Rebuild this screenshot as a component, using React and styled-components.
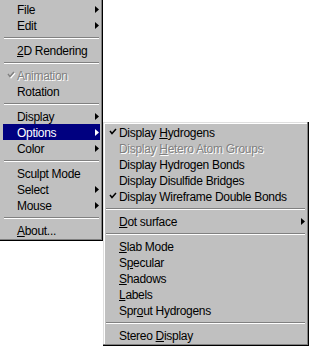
import styled, { createGlobalStyle } from "styled-components"

const GlobalStyle = createGlobalStyle`
    html, body {
        margin: 0;
        padding: 0;
        background: #ffffff;
    }
    body {
        font-family: "Liberation Sans", Arial, sans-serif;
        font-size: 12px;
    }
`

const Stage = styled.div`
    position: relative;
    width: 309px;
    height: 348px;
    overflow: hidden;
    background: #ffffff;
`

const Menu = styled.div`
    display: flex;
    flex-direction: column;
    box-sizing: border-box;
    width: ${p => p.$width}px;
    background: #c0c0c0;
    padding: ${p => p.$clipped ? "1px 3px 3px 3px" : "2px 3px 3px 2px"};
    box-shadow:
        inset -1px -1px 0 #000000,
        inset -2px -2px 0 #808080
        ${p => p.$clipped ? "" : ", inset 1px 1px 0 #dfdfdf, inset 2px 2px 0 #ffffff"};
`

const SubMenu = styled(Menu)`
    position: absolute;
    left: 103px;
    top: 122px;
`

const Item = styled.div`
    display: grid;
    grid-template-columns: 14px 1fr 6px;
    align-items: center;
    height: 16px;
    white-space: nowrap;
    background: ${p => p.$active ? "#000080" : "transparent"};
    color: ${p => p.$active ? "#ffffff" : p.$disabled ? "#808080" : "#000000"};
    text-shadow: ${p => p.$disabled ? "1px 1px 0 #ffffff" : "none"};
`

const Gutter = styled.span`
    display: flex;
    align-items: center;
    padding-left: 5px;
    height: 16px;
`

const Label = styled.span`
    line-height: 14px;
    padding-top: 2px;
    letter-spacing: -0.3px;
`

const Key = styled.span`
    text-decoration: underline;
    text-underline-offset: 1px;
`

const ArrowCell = styled.span`
    display: flex;
    align-items: center;
    justify-content: flex-end;
    padding-right: 1px;
    height: 16px;
`

const Separator = styled.div`
    height: 9px;
    display: flex;
    flex-direction: column;
    justify-content: center;
    padding: 0 1px;
    &::before, &::after {
        content: "";
        display: block;
        height: 1px;
    }
    &::before { background: #808080; }
    &::after { background: #ffffff; }
`

function Check({ disabled }) {
    const pts = "0,3 2,5.5 6,1"
    return (
        <svg width="8" height="8" viewBox="0 0 8 8" style={{ overflow: "visible" }}>
            {disabled && <polyline points={pts} transform="translate(1,1)" fill="none" stroke="#ffffff" strokeWidth="1.5" />}
            <polyline points={pts} fill="none" stroke={disabled ? "#808080" : "#000000"} strokeWidth="1.5" />
        </svg>
    )
}

function Arrow({ color }) {
    return (
        <svg width="4" height="7" viewBox="0 0 4 7">
            <polygon points="0,0 4,3.5 0,7" fill={color} />
        </svg>
    )
}

function MenuItem({ label, keyAt, sub, checked, disabled, active }) {
    let text = label
    if (keyAt !== undefined) {
        text = <>
            {label.slice(0, keyAt)}
            <Key>{label[keyAt]}</Key>
            {label.slice(keyAt + 1)}
        </>
    }
    return (
        <Item $active={active} $disabled={disabled}>
            <Gutter>{checked && <Check disabled={disabled} />}</Gutter>
            <Label>{text}</Label>
            <ArrowCell>{sub && <Arrow color={active ? "#ffffff" : "#000000"} />}</ArrowCell>
        </Item>
    )
}

const mainItems = [
    { label: "File", sub: true },
    { label: "Edit", sub: true },
    "sep",
    { label: "2D Rendering", keyAt: 0 },
    "sep",
    { label: "Animation", checked: true, disabled: true },
    { label: "Rotation" },
    "sep",
    { label: "Display", sub: true },
    { label: "Options", sub: true, active: true },
    { label: "Color", sub: true },
    "sep",
    { label: "Sculpt Mode" },
    { label: "Select", sub: true },
    { label: "Mouse", sub: true },
    "sep",
    { label: "About...", keyAt: 0 },
]

const optionItems = [
    { label: "Display Hydrogens", keyAt: 8, checked: true },
    { label: "Display Hetero Atom Groups", keyAt: 8, disabled: true },
    { label: "Display Hydrogen Bonds" },
    { label: "Display Disulfide Bridges" },
    { label: "Display Wireframe Double Bonds", checked: true },
    "sep",
    { label: "Dot surface", keyAt: 0, sub: true },
    "sep",
    { label: "Slab Mode", keyAt: 0 },
    { label: "Specular", keyAt: 1 },
    { label: "Shadows", keyAt: 0 },
    { label: "Labels", keyAt: 0 },
    { label: "Sprout Hydrogens", keyAt: 3 },
    "sep",
    { label: "Stereo Display", keyAt: 7 },
]

function renderItems(items) {
    return items.map((it, idx) =>
        it === "sep" ? <Separator key={idx} /> : <MenuItem key={idx} {...it} />
    )
}

export default function App() {
    return <>
        <GlobalStyle />
        <Stage>
            <Menu $width={103} $clipped>
                {renderItems(mainItems)}
            </Menu>
            <SubMenu $width={206}>
                {renderItems(optionItems)}
            </SubMenu>
        </Stage>
    </>
}
